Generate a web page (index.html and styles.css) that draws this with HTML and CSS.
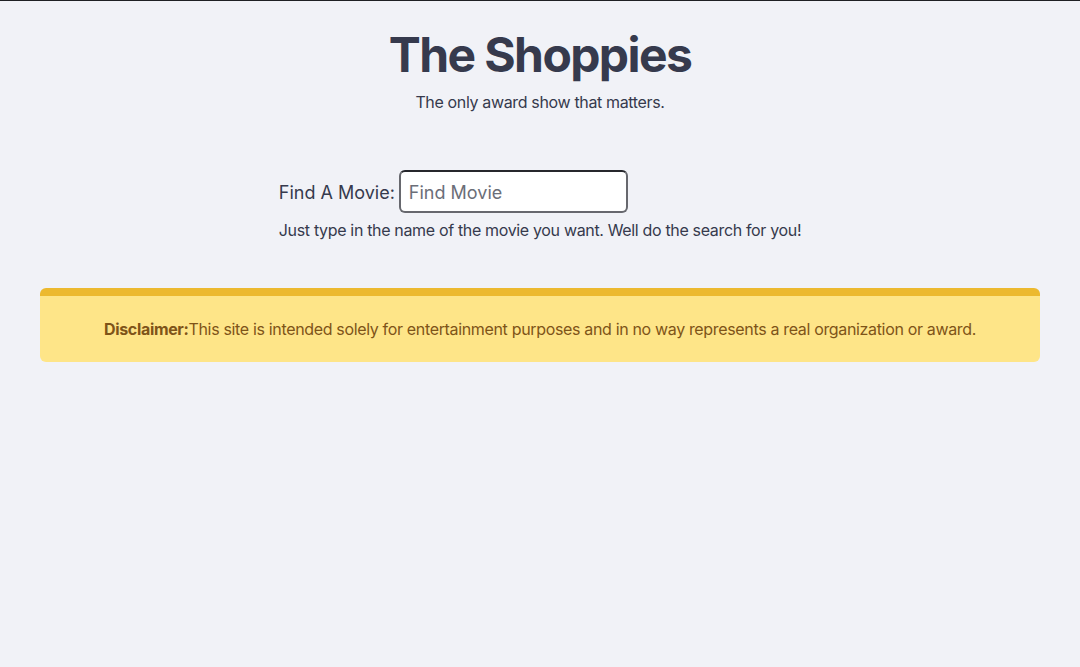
FILE: index.html
```html
<!DOCTYPE html>
<html lang="en">
<head>
<meta charset="utf-8">
<title>The Shoppies</title>
<link rel="stylesheet" href="styles.css">
</head>
<body>
<header class="hero">
  <h1 class="title">The Shoppies</h1>
  <p class="subtitle">The only award show that matters.</p>
</header>
<section class="search">
  <div class="search-inner">
    <div class="search-row">
      <label class="search-label" for="movie">Find A Movie:</label>
      <input class="search-input" id="movie" type="text" placeholder="Find Movie">
    </div>
    <p class="search-help">Just type in the name of the movie you want. Well do the search for you!</p>
  </div>
</section>
<div class="disclaimer">
  <p class="disclaimer-text"><strong>Disclaimer:</strong>This site is intended solely for entertainment purposes and in no way represents a real organization or award.</p>
</div>
</body>
</html>
```
FILE: styles.css
```css
html, body {
  margin: 0;
  padding: 0;
}
body {
  background: #f1f2f7;
  border-top: 1px solid #1f2024;
  min-height: 666px;
  font-family: Inter, "Liberation Sans", sans-serif;
  color: #363a4d;
}
.hero {
  text-align: center;
  padding-top: 30px;
}
.title {
  margin: 0;
  font-size: 48px;
  line-height: 48px;
  font-weight: 700;
  letter-spacing: -1.6px;
}
.subtitle {
  margin: 11px 0 0;
  font-size: 16px;
  line-height: 24px;
  letter-spacing: -0.35px;
}
.search {
  display: flex;
  justify-content: center;
  margin-top: 56px;
}
.search-inner {
  display: flex;
  flex-direction: column;
}
.search-row {
  display: flex;
  align-items: center;
  gap: 4px;
}
.search-label {
  font-size: 18px;
  line-height: 28px;
  padding-top: 2px;
}
.search-input {
  box-sizing: border-box;
  width: 229px;
  height: 43px;
  border: 2px solid #67686e;
  border-top-color: #26272c;
  border-radius: 6px;
  background: #fff;
  padding: 2px 8px 0;
  font-family: Inter, "Liberation Sans", sans-serif;
  font-size: 18px;
  color: #363a4d;
  outline: none;
}
.search-input::placeholder {
  color: #6b6e78;
}
.search-help {
  margin: 5px 0 0;
  font-size: 16px;
  line-height: 24px;
  letter-spacing: -0.34px;
}
.disclaimer {
  margin: 46px 40px 0;
  background: #fee588;
  border-top: 8px solid #ecb92f;
  border-radius: 6px;
  text-align: center;
  padding: 21px 16px 21px;
}
.disclaimer-text {
  margin: 0;
  font-size: 16px;
  line-height: 24px;
  letter-spacing: -0.34px;
  color: #7e5418;
}
.disclaimer-text strong {
  font-weight: 700;
}
```
